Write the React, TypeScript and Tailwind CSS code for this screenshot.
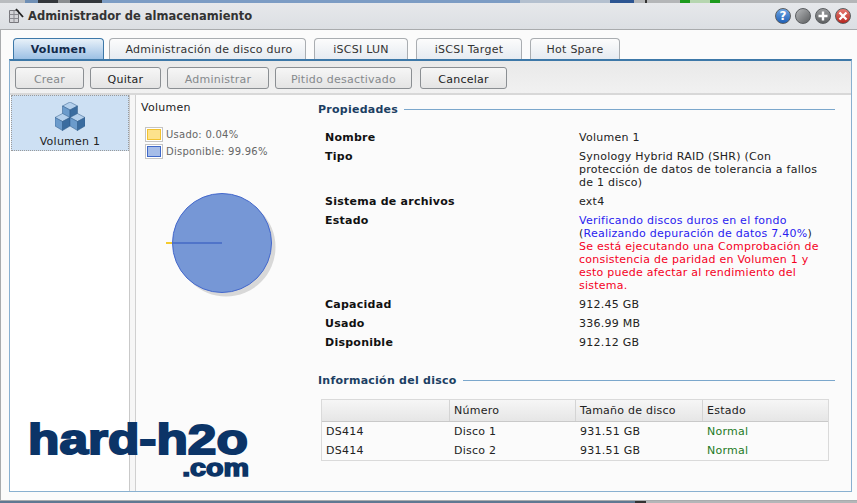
import React from "react";

const tabs = ["Administración de disco duro", "iSCSI LUN", "iSCSI Target", "Hot Spare"];
const tabWidths = ["w-[197px] ml-[5px] pl-[3px]", "w-[94px] ml-[8px]", "w-[106px] ml-[8px]", "w-[90px] ml-[8px]"];

const properties: { label: string; value: React.ReactNode; h: string }[] = [
  { label: "Nombre", value: "Volumen 1", h: "h-[19px]" },
  {
    label: "Tipo",
    value: (
      <>
        Synology Hybrid RAID (SHR) (Con
        <br />
        protección de datos de tolerancia a fallos
        <br />
        de 1 disco)
      </>
    ),
    h: "h-[45px]",
  },
  { label: "Sistema de archivos", value: "ext4", h: "h-[19px]" },
  {
    label: "Estado",
    value: (
      <>
        <span className="text-[#2a1cf0]">Verificando discos duros en el fondo</span>
        <br />
        <span className="text-[#222]">(</span>
        <span className="text-[#2a1cf0]">Realizando depuración de datos 7.40%</span>
        <span className="text-[#222]">)</span>
        <br />
        <span className="text-[#f5001e]">
          Se está ejecutando una Comprobación de
          <br />
          consistencia de paridad en Volumen 1 y
          <br />
          esto puede afectar al rendimiento del
          <br />
          sistema.
        </span>
      </>
    ),
    h: "h-[84px]",
  },
  { label: "Capacidad", value: "912.45 GB", h: "h-[19px]" },
  { label: "Usado", value: "336.99 MB", h: "h-[19px]" },
  { label: "Disponible", value: "912.12 GB", h: "h-[19px]" },
];

const disks = [
  { name: "DS414", num: "Disco 1" },
  { name: "DS414", num: "Disco 2" },
];

// bits of the desktop that show above and below the window
const topStrip = [
  "w-[25px] bg-[#b9bcbf]",
  "w-[13px] bg-[#6f8fb5]",
  "w-[20px] bg-[#33373c]",
  "w-[12px] bg-[#8a8d90]",
  "w-[32px] bg-[#33373c]",
  "w-[418px] bg-[#7c9cc4]",
  "w-[90px] bg-[#b4c0cf]",
  "w-[24px] bg-[#2c5592]",
  "w-[11px] bg-[#b4b6b8]",
  "w-[2px] bg-[#333]",
  "w-[33px] bg-[#b4b6b8]",
  "w-[10px] bg-[#1c9a1c]",
  "w-[20px] bg-[#b6d6b0]",
  "w-[10px] bg-[#1c9a1c]",
  "flex-1 bg-[#b4b6b8]",
];

function ToolButton({ label, w, off }: { label: string; w: string; off?: boolean }) {
  return (
    <div
      className={`flex h-[22px] items-center justify-center rounded-[3px] border border-[#8b8f93] bg-gradient-to-b from-[#f6f6f6] to-[#e4e4e4] pt-[2px] ${w} ${off ? "text-[#85898c]" : "text-[#222]"}`}
    >
      {label}
    </div>
  );
}

function SectionTitle({ title }: { title: string }) {
  return (
    <div className="flex h-[16px] items-center gap-[6px] font-bold text-[#1c3f63]">
      <span className="whitespace-nowrap">{title}</span>
      <div className="h-px flex-1 bg-[#7ba7cc]" />
    </div>
  );
}

function CubesIcon() {
  const cube = (x: number, y: number) => (
    <g transform={`translate(${x} ${y})`} stroke="#2f5a88" strokeWidth="0.5" strokeLinejoin="round">
      <path d="M0 4 L7.5 0 L15 4 L7.5 8 Z" fill="#b4d0ec" />
      <path d="M0 4 L7.5 8 L7.5 17 L0 12.5 Z" fill="#6b9bcb" />
      <path d="M7.5 8 L15 4 L15 12.5 L7.5 17 Z" fill="#3a6c9f" />
    </g>
  );
  return (
    <svg width="30" height="29" viewBox="0 0 30 29">
      {cube(7.5, 0)}
      {cube(0, 11.5)}
      {cube(15, 11.5)}
    </svg>
  );
}

function WindowDot({ bg, children }: { bg: string; children?: React.ReactNode }) {
  return (
    <div className={`flex h-[16px] w-[16px] items-center justify-center rounded-full border border-[#5a5d60] ${bg}`}>
      {children}
    </div>
  );
}

export default function App() {
  return (
    <div className="relative h-[503px] w-[857px] overflow-hidden bg-[#b4b6b8] font-['DejaVu_Sans',sans-serif] text-[11px] leading-[13px] tracking-[0.25px] text-[#222]">
      <div className="flex h-[3px]">
        {topStrip.map((c, i) => (
          <div key={i} className={c} />
        ))}
      </div>
      {/* title bar */}
      <div className="flex h-[27px] items-center border-b border-[#a9abad] bg-gradient-to-b from-[#e6e8eb] to-[#dcdfe3] pl-[8px] pr-[6px]">
        <svg width="16" height="18" viewBox="0 0 16 18" className="mr-[4px]">
          <path d="M1.5 3.5h9v12h-9z" fill="#d4d4d8" stroke="#77777c" />
          <path d="M1.5 7.5h9M1.5 11.5h9M6 3.5v12" stroke="#8a8a90" />
          <path d="M8 2l7 8" stroke="#222" strokeWidth="1.8" />
        </svg>
        <span className="text-[11.5px] font-bold tracking-normal text-[#333]">Administrador de almacenamiento</span>
        <div className="ml-auto flex gap-[4px]">
          <WindowDot bg="bg-gradient-to-b from-[#6ea6e4] to-[#1d5fb6]">
            <span className="text-[12px] font-bold leading-none text-white">?</span>
          </WindowDot>
          <WindowDot bg="bg-gradient-to-br from-[#b8babc] to-[#5c5e60]" />
          <WindowDot bg="bg-gradient-to-b from-[#9a9c9e] to-[#5f6163]">
            <svg width="10" height="10" viewBox="0 0 10 10">
              <path d="M5 0.5v9M0.5 5h9" stroke="#fff" strokeWidth="2.4" />
            </svg>
          </WindowDot>
          <WindowDot bg="bg-gradient-to-b from-[#e67a72] to-[#b8231d]">
            <svg width="10" height="10" viewBox="0 0 10 10">
              <path d="M1.5 1.5l7 7M8.5 1.5l-7 7" stroke="#fff" strokeWidth="2.4" />
            </svg>
          </WindowDot>
        </div>
      </div>

      {/* window body */}
      <div className="flex h-[471px] flex-col border-b border-l border-[#a9abad] bg-[#fbfbfb] pl-[8px] pr-[5px] pt-[8px]">
        <div className="flex h-[21px] items-end pl-[4px]">
          <div className="flex h-[21px] w-[91px] items-center justify-center rounded-t-[4px] border border-b-0 border-[#3d78a8] bg-gradient-to-b from-[#e8f1f9] to-[#9cc0e4] font-bold text-[#12294a]">
            Volumen
          </div>
          {tabs.map((t, i) => (
            <div
              key={t}
              className={`flex h-[21px] items-center justify-center rounded-t-[4px] border border-b-0 border-[#a9adb1] bg-gradient-to-b from-[#fcfcfc] to-[#e6ebf1] text-[#333] ${tabWidths[i]}`}
            >
              {t}
            </div>
          ))}
        </div>

        <div className="flex h-[433px] flex-col border border-t-2 border-[#89b0d0] border-t-[#3d78a8]">
          {/* toolbar */}
          <div className="flex h-[32px] items-center bg-gradient-to-b from-[#e9e9e9] to-[#f1f1f1] pl-[5px] pt-[2px]">
            <ToolButton label="Crear" w="w-[69px]" off />
            <ToolButton label="Quitar" w="w-[71px] ml-[6px]" />
            <ToolButton label="Administrar" w="w-[102px] ml-[6px]" off />
            <ToolButton label="Pitido desactivado" w="w-[137px] ml-[6px]" off />
            <ToolButton label="Cancelar" w="w-[87px] ml-[8px]" />
          </div>

          <div className="flex min-h-0 flex-1 border-t-2 border-[#d8d8d8]">
            {/* sidebar */}
            <div className="w-[120px] shrink-0 border-r border-[#c9c9c9] bg-white pl-px">
              <div className="flex h-[56px] flex-col items-center border border-dotted border-[#9a9a9a] bg-[#cde0f3] pt-[6px]">
                <CubesIcon />
                <span className="mt-[4px]">Volumen 1</span>
              </div>
            </div>
            <div className="w-[6px] shrink-0 border-r border-[#d0d0d0] bg-[#f6f6f6]" />

            {/* chart column */}
            <div className="w-[182px] shrink-0 pl-[5px] pt-[6px]">
              <div>Volumen</div>
              <div className="ml-[4px] mt-[12px] flex flex-col text-[10px] text-[#666]">
                <div className="flex h-[17px] items-center gap-[3px]">
                  <div className="h-[15px] w-[18px] border border-[#c4c4c4] bg-white p-px">
                    <div className="h-full border border-[#f2c230] bg-[#fde28c]" />
                  </div>
                  Usado: 0.04%
                </div>
                <div className="flex h-[17px] items-center gap-[3px]">
                  <div className="h-[15px] w-[18px] border border-[#c4c4c4] bg-white p-px">
                    <div className="h-full border border-[#3f68c8] bg-[#a6bde8]" />
                  </div>
                  Disponible: 99.96%
                </div>
              </div>
              <svg width="125" height="115" viewBox="0 0 125 115" className="ml-[29px] mt-[28px]">
                <circle cx="56" cy="59" r="49.5" fill="#d8d8d8" />
                <circle cx="52" cy="55" r="49.5" fill="#7697d6" stroke="#4468cc" />
                <path d="M3 55H52" stroke="#4468c4" strokeWidth="1.5" />
              </svg>
            </div>

            {/* details */}
            <div className="min-w-0 flex-1 pr-[16px] pt-[6px]">
              <SectionTitle title="Propiedades" />
              <div className="mt-[14px]">
                {properties.map((p) => (
                  <div key={p.label} className={`flex ${p.h}`}>
                    <div className="w-[261px] pl-[7px] font-bold text-[#111]">{p.label}</div>
                    <div className="flex-1">{p.value}</div>
                  </div>
                ))}
              </div>

              <div className="mt-[17px]">
                <SectionTitle title="Información del disco" />
              </div>
              <div className="ml-[3px] mr-[6px] mt-[11px] border border-[#dadada]">
                <div className="flex h-[22px] items-center border-b border-[#c9c9c9] bg-gradient-to-b from-[#f6f6f6] to-[#e6e6e6]">
                  <div className="h-full w-[128px] border-r border-[#d4d4d4]" />
                  <div className="flex h-full w-[126px] items-center border-r border-[#d4d4d4] pl-[4px]">Número</div>
                  <div className="flex h-full w-[127px] items-center border-r border-[#d4d4d4] pl-[4px]">Tamaño de disco</div>
                  <div className="pl-[4px]">Estado</div>
                </div>
                {disks.map((d) => (
                  <div key={d.num} className="flex h-[19px] items-center">
                    <div className="w-[128px] pl-[4px]">{d.name}</div>
                    <div className="w-[126px] pl-[4px]">{d.num}</div>
                    <div className="w-[127px] pl-[4px]">931.51 GB</div>
                    <div className="pl-[4px] text-[#1e7a1e]">Normal</div>
                  </div>
                ))}
              </div>
            </div>
          </div>
        </div>
      </div>
      <div className="flex h-[2px]">
        <div className="w-[635px] bg-[#5f7892]" />
        <div className="w-[11px] bg-[#333]" />
        <div className="flex-1 bg-[#b4b6b8]" />
      </div>

      {/* stub of the used slice, sticks out of the pie */}
      <div className="absolute left-[166px] top-[242px] h-[2px] w-[6px] bg-[#f5cb2e]" />

      {/* watermark */}
      <div className="absolute left-[28px] top-[419px] w-[185px] origin-top-left scale-x-[1.195] font-['Liberation_Sans',sans-serif] font-bold tracking-normal text-[#0b3467] [-webkit-text-stroke:2px_#0b3467]">
        <div className="whitespace-nowrap text-[43px] leading-[40px]">hard-h2o</div>
        <div className="text-right text-[24px] leading-[18px] [-webkit-text-stroke:1.5px_#0b3467]">.com</div>
      </div>
    </div>
  );
}
